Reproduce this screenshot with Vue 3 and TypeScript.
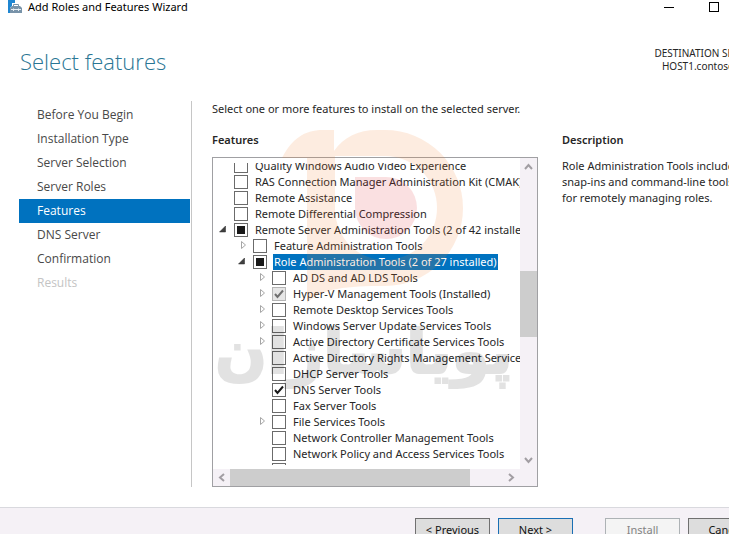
<script setup lang="ts">
import { ref } from 'vue'

type CheckState = 'off' | 'on' | 'partial' | 'locked'
type Branch = 'none' | 'closed' | 'open'

interface FeatureNode {
  id: string
  label: string
  level: number
  branch: Branch
  state: CheckState
}

const steps = [
  'Before You Begin',
  'Installation Type',
  'Server Selection',
  'Server Roles',
  'Features',
  'DNS Server',
  'Confirmation',
  'Results',
]
const currentStep = 'Features'
const pendingStep = 'Results'

function node(id: string, label: string, level: number, branch: Branch = 'none', state: CheckState = 'off'): FeatureNode {
  return { id, label, level, branch, state }
}

const features = ref<FeatureNode[]>([
  node('qwave', 'Quality Windows Audio Video Experience', 0),
  node('cmak', 'RAS Connection Manager Administration Kit (CMAK)', 0),
  node('assist', 'Remote Assistance', 0),
  node('rdc', 'Remote Differential Compression', 0),
  node('rsat', 'Remote Server Administration Tools (2 of 42 installed)', 0, 'open', 'partial'),
  node('fat', 'Feature Administration Tools', 1, 'closed'),
  node('rat', 'Role Administration Tools (2 of 27 installed)', 1, 'open', 'partial'),
  node('adds', 'AD DS and AD LDS Tools', 2, 'closed'),
  node('hyperv', 'Hyper-V Management Tools (Installed)', 2, 'closed', 'locked'),
  node('rds', 'Remote Desktop Services Tools', 2, 'closed'),
  node('wsus', 'Windows Server Update Services Tools', 2, 'closed'),
  node('adcs', 'Active Directory Certificate Services Tools', 2, 'closed'),
  node('adrms', 'Active Directory Rights Management Services Tools', 2),
  node('dhcp', 'DHCP Server Tools', 2),
  node('dns', 'DNS Server Tools', 2, 'none', 'on'),
  node('fax', 'Fax Server Tools', 2),
  node('file', 'File Services Tools', 2, 'closed'),
  node('netctl', 'Network Controller Management Tools', 2),
  node('npas', 'Network Policy and Access Services Tools', 2),
  node('print', 'Print and Document Services Tools', 2),
])
const selected = ref('rat')

function toggle(item: FeatureNode) {
  item.state = item.state === 'on' ? 'off' : 'on'
  selected.value = item.id
}
</script>

<template>
  <div class="window">
    <header class="titlebar">
      <svg class="app-icon" viewBox="0 0 14 13" aria-hidden="true">
        <path d="M0 0H7V3H4V6L2 8V13H0Z" fill="#1f86d1" />
        <path d="M2 8 4 6H12L14 8V13H2Z" fill="#7893a9" />
        <path d="M5.500 6V4.500H10.500V6" fill="none" stroke="#7893a9" />
        <path d="M3 9.500H13M5.500 8.500V11M10.500 8.500V11" fill="none" stroke="#e6edf2" />
      </svg>
      <span class="caption">Add Roles and Features Wizard</span>
      <button class="caption-button" type="button" aria-label="Minimize">
        <svg viewBox="0 0 12 12"><path d="M1 6.500H11" stroke="#000" /></svg>
      </button>
      <button class="caption-button" type="button" aria-label="Maximize">
        <svg viewBox="0 0 12 12"><rect x="1.500" y="1.500" width="9" height="9" fill="none" stroke="#000" /></svg>
      </button>
      <button class="caption-button" type="button" aria-label="Close">
        <svg viewBox="0 0 12 12"><path d="M1 1 11 11M11 1 1 11" stroke="#000" /></svg>
      </button>
    </header>

    <div class="heading">
      <h1>Select features</h1>
      <p class="destination">DESTINATION SERVER<br />HOST1.contoso.com</p>
    </div>

    <div class="content">
      <nav class="steps">
        <a
          v-for="step in steps"
          :key="step"
          href="#"
          :class="{ current: step === currentStep, pending: step === pendingStep }"
          >{{ step }}</a
        >
      </nav>

      <main class="page">
        <p class="intro">Select one or more features to install on the selected server.</p>

        <section class="picker">
          <h2>Features</h2>
          <div class="listbox">
            <div class="viewport">
              <ul class="tree">
                <li v-for="item in features" :key="item.id" :class="['row', 'level-' + item.level]">
                  <span class="twisty">
                    <button v-if="item.branch === 'closed'" type="button" :aria-label="'Expand ' + item.label">
                      <svg viewBox="0 0 10 10"><path d="M4.500 1.500 8.500 5 4.500 8.500Z" fill="#fff" stroke="#a6a6a6" /></svg>
                    </button>
                    <button v-else-if="item.branch === 'open'" type="button" :aria-label="'Collapse ' + item.label">
                      <svg viewBox="0 0 10 10"><path d="M7.500 2V8H1.500Z" fill="#404040" stroke="#262626" stroke-width="0.500" /></svg>
                    </button>
                  </span>
                  <span class="check">
                    <input
                      :id="item.id"
                      type="checkbox"
                      :checked="item.state === 'on' || item.state === 'locked'"
                      :disabled="item.state === 'locked'"
                      :indeterminate="item.state === 'partial'"
                      @change="toggle(item)"
                    />
                    <svg v-if="item.state === 'on' || item.state === 'locked'" viewBox="0 0 14 14">
                      <path
                        d="M3 7 5.500 10 11 3.500"
                        fill="none"
                        :stroke="item.state === 'on' ? '#1a1a1a' : '#707070'"
                        stroke-width="2"
                      />
                    </svg>
                    <svg v-else-if="item.state === 'partial'" viewBox="0 0 14 14">
                      <rect x="3" y="3" width="8" height="8" fill="#1a1a1a" />
                    </svg>
                  </span>
                  <label :for="item.id" :class="{ selected: item.id === selected }">{{ item.label }}</label>
                </li>
              </ul>
            </div>
            <div class="scroll vertical">
              <button type="button" aria-label="Scroll up">
                <svg viewBox="0 0 17 17"><path d="M5 11 8.500 7 12 11" /></svg>
              </button>
              <div class="track"><div class="thumb"></div></div>
              <button type="button" aria-label="Scroll down">
                <svg viewBox="0 0 17 17"><path d="M5 6 8.500 10 12 6" /></svg>
              </button>
            </div>
            <div class="scroll horizontal">
              <button type="button" aria-label="Scroll left">
                <svg viewBox="0 0 17 17"><path d="M11 5 7 8.500 11 12" /></svg>
              </button>
              <div class="track"><div class="thumb"></div></div>
              <button type="button" aria-label="Scroll right">
                <svg viewBox="0 0 17 17"><path d="M6 5 10 8.500 6 12" /></svg>
              </button>
            </div>
          </div>

          <svg class="watermark" viewBox="0 7 326 290">
            <path
              d="M70 33C80 14 92 5 111 5H122V26C132 12 146 5 165 5H173A78 78 0 0 1 173 161C135 161 110 163 95 178V33ZM123 31H173A52 52 0 0 1 173 135C145 135 123 112 123 83Z"
              fill="#f0822d"
              fill-opacity="0.150"
              fill-rule="evenodd"
            />
            <path d="M143 52H174A31 31 0 1 1 143 83Z" fill="#d92027" fill-opacity="0.140" />
            <text x="152" y="248" text-anchor="middle" direction="rtl">پویاسازان</text>
          </svg>
        </section>

        <aside class="description">
          <h2>Description</h2>
          <p>Role Administration Tools includes snap-ins and command-line tools for remotely managing roles.</p>
        </aside>
      </main>
    </div>

    <footer class="actions">
      <button type="button">&lt; Previous</button>
      <button type="button" class="default">Next &gt;</button>
      <button type="button" class="install" disabled>Install</button>
      <button type="button">Cancel</button>
    </footer>
  </div>
</template>

<style>
body {
  overflow: hidden;
  background: #fff;
}
</style>

<style scoped>
.window {
  min-width: 783px;
  color: #262626;
  font: 11px/16px 'Noto Sans', 'Open Sans', sans-serif;
}
h1,
h2,
p,
ul {
  margin: 0;
  padding: 0;
}
button {
  margin: 0;
  padding: 0;
  border: 0;
  background: none;
  font: inherit;
  color: inherit;
}
svg {
  display: block;
}
.titlebar {
  display: flex;
  align-items: center;
  height: 13px;
  padding: 0 2px 0 8px;
  color: #000;
}
.app-icon {
  width: 14px;
  height: 13px;
}
.caption {
  flex: 1;
  margin-left: 6px;
}
.caption-button {
  width: 45px;
}
.caption-button svg {
  width: 12px;
  margin: 0 auto;
}
.heading {
  display: flex;
  justify-content: space-between;
  align-items: flex-start;
  height: 88px;
  padding: 32px 26px 0 20px;
  box-sizing: border-box;
}
h1 {
  color: #2a7694;
  font-family: 'Open Sans', sans-serif;
  font-size: 22px;
  line-height: 32px;
  font-weight: 300;
}
.destination {
  font-size: 10px;
  line-height: 13px;
  padding-top: 2px;
  text-align: right;
}
.content {
  display: flex;
  padding: 0 20px 20px 19px;
}
.steps {
  flex: none;
  width: 171px;
  padding: 2px 1px 0 0;
  border-right: 1px solid #c6c6c6;
}
.steps a {
  display: block;
  padding-left: 18px;
  color: #484848;
  font-family: 'Open Sans', sans-serif;
  font-size: 12px;
  line-height: 24px;
  text-decoration: none;
}
.steps a.current {
  background: #0072bf;
  color: #fff;
}
.steps a.pending {
  color: #c4c4c4;
}
.page {
  flex: 1;
  display: grid;
  grid-template-columns: 326px 1fr;
  column-gap: 24px;
  padding-left: 20px;
}
.intro {
  grid-column: 1 / -1;
  height: 31px;
}
h2 {
  height: 25px;
  font-size: 11px;
  font-weight: 600;
}
.picker {
  position: relative;
}
.listbox {
  display: grid;
  grid-template-columns: 1fr 17px;
  border: 1px solid #a0a0a3;
  background: #fff;
}
.viewport {
  height: 302px;
  margin: 5px 0 4px;
  overflow: hidden;
}
.tree {
  margin-top: -5px;
  list-style: none;
}
.row {
  display: flex;
  align-items: center;
  height: 16px;
  white-space: nowrap;
}
.level-1 {
  padding-left: 19px;
}
.level-2 {
  padding-left: 38px;
}
.twisty {
  flex: none;
  width: 21px;
}
.twisty svg {
  width: 10px;
  margin-left: 5px;
}
.check {
  position: relative;
  flex: none;
  width: 14px;
  height: 14px;
  margin-right: 6px;
}
.check input {
  appearance: none;
  display: block;
  width: 14px;
  height: 14px;
  margin: 0;
  border: 1px solid #6b6b6b;
  background: #fff;
}
.check input:disabled {
  border-color: #b4b4b4;
  background: #e6e6e6;
}
.check svg {
  position: absolute;
  inset: 0;
  pointer-events: none;
}
.row label {
  padding: 0 1px;
}
.row label.selected {
  background: #0072bf;
  color: #fff;
}
.scroll {
  display: flex;
  background: #f5f1f6;
}
.scroll button {
  flex: none;
  width: 17px;
  height: 17px;
}
.scroll path {
  fill: none;
  stroke: #a29ea3;
  stroke-width: 2;
}
.vertical {
  flex-direction: column;
}
.horizontal {
  grid-column: 1 / -1;
  padding-right: 17px;
}
.track {
  flex: 1;
}
.thumb {
  background: #cdcdcd;
}
.vertical .thumb {
  height: 66px;
  margin-top: 96px;
}
.horizontal .thumb {
  width: 88%;
  height: 17px;
}
.watermark {
  position: absolute;
  top: 0;
  left: 0;
  width: 326px;
  height: 290px;
  overflow: visible;
  pointer-events: none;
}
.watermark text {
  font: bold 61px 'DejaVu Sans', sans-serif;
  fill: #000;
  stroke: #000;
  stroke-width: 2px;
  opacity: 0.11;
}
.description p {
  padding: 1px 20px 0 0;
}
.actions {
  display: flex;
  justify-content: flex-end;
  gap: 8px;
  padding: 10px 20px 20px;
  border-top: 1px solid #d9d9de;
  background: #f5f1f6;
}
.actions button {
  box-sizing: border-box;
  width: 75px;
  height: 23px;
  border: 1px solid #707070;
  background: #dddddd;
  color: #111;
}
.actions .default {
  border-color: #1a6fb4;
}
.actions .install {
  margin-left: 24px;
  border-color: #adb2b5;
  background: #f4f4f4;
  color: #838383;
}
</style>
